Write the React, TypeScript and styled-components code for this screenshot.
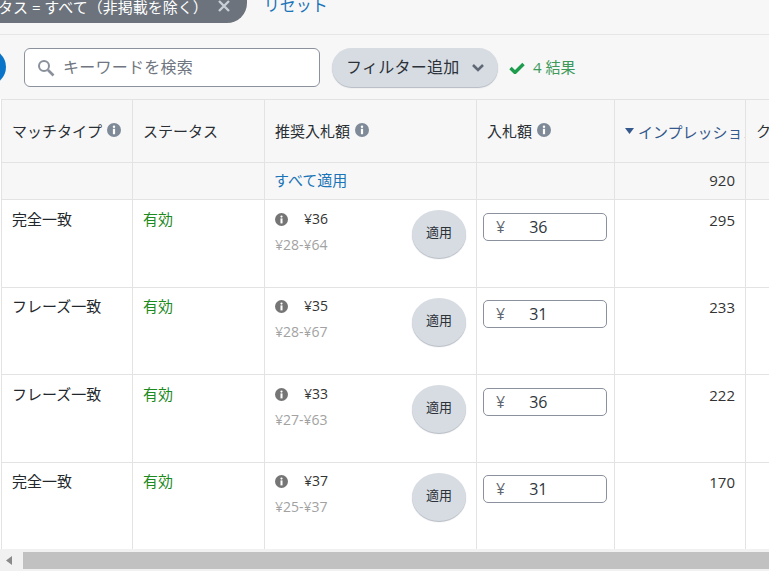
import { createGlobalStyle, styled } from 'styled-components';

const GlobalStyle = createGlobalStyle`
    html, body {
        margin: 0;
        padding: 0;
        background: #fff;
    }
    body {
        font-family: "Open Sans", "Noto Sans CJK JP", sans-serif;
        color: #1c2126;
    }
`;

const Page = styled.div`
    width: 769px;
    height: 582px;
    overflow: hidden;
    display: flex;
    flex-direction: column;
    background: #f7f7f7;
`;

const FilterBar = styled.div`
    height: 34px;
    flex: none;
    display: flex;
    align-items: flex-start;
    gap: 17px;
    border-bottom: 1px solid #e6e6e6;
`;

const FilterChip = styled.div`
    margin: -14px 0 0 -64px;
    height: 37px;
    padding: 3px 17px 0 17px;
    box-sizing: border-box;
    display: flex;
    align-items: center;
    gap: 10px;
    background: #6c737c;
    color: #fff;
    border-radius: 0 0 20px 0;
    font-size: 15px;
    white-space: nowrap;
`;

const ResetLink = styled.a`
    margin-top: -7px;
    color: #1a74b8;
    font-size: 16px;
    line-height: 24px;
`;

const Toolbar = styled.div`
    height: 64px;
    flex: none;
    display: flex;
    align-items: flex-start;
    padding-top: 13px;
    box-sizing: border-box;
`;

const BlueDot = styled.div`
    width: 36px;
    height: 36px;
    margin: 1px 18px 0 -30px;
    flex: none;
    border-radius: 50%;
    background: #0a74c8;
`;

const SearchBox = styled.div`
    width: 296px;
    height: 39px;
    box-sizing: border-box;
    display: flex;
    align-items: center;
    gap: 8px;
    padding: 0 0 0 12px;
    background: #fff;
    border: 1px solid #8b929e;
    border-radius: 6px;
    color: #6f7680;
    font-size: 16px;
    letter-spacing: 0.25px;
`;

const ButtonLabel = styled.span`
    margin-bottom: 3px;
`;

const FilterButton = styled.div`
    margin-left: 12px;
    width: 166px;
    height: 39px;
    box-sizing: border-box;
    display: flex;
    align-items: center;
    gap: 12px;
    padding-left: 14px;
    background: #d7dce3;
    border-radius: 20px;
    box-shadow: 0 1px 1px #b4bac2;
    color: #2c323a;
    font-size: 16px;
    letter-spacing: 0.25px;
`;

const ResultCount = styled.div`
    margin-left: 11px;
    height: 39px;
    display: flex;
    align-items: center;
    gap: 8px;
    color: #3d9a5a;
    font-size: 15px;
`;

const TableWrap = styled.div`
    height: 450px;
    flex: none;
    overflow: hidden;
    padding-left: 1px;
    background: #fff;
`;

const Table = styled.table`
    table-layout: fixed;
    width: 900px;
    border-collapse: collapse;
    font-size: 15px;
`;

const HeadCell = styled.th<{ $sorted?: boolean }>`
    height: 63px;
    box-sizing: border-box;
    padding: 0 10px 2px;
    background: #f7f7f7;
    border: 1px solid #e3e3e3;
    text-align: left;
    font-weight: 400;
    white-space: nowrap;
    overflow: hidden;
    color: ${p => (p.$sorted ? '#35598c' : '#2a2f35')};
`;

const SumCell = styled.td<{ $right?: boolean }>`
    height: 37px;
    box-sizing: border-box;
    padding: 0 10px 3px;
    background: #f7f7f7;
    border: 1px solid #e3e3e3;
    color: #333;
    text-align: ${p => (p.$right ? 'right' : 'left')};
`;

const BodyCell = styled.td<{ $green?: boolean }>`
    box-sizing: border-box;
    padding: calc(8px - var(--row-shift)) 10px 0;
    vertical-align: top;
    border: 1px solid #e3e3e3;
    background: #fff;
    line-height: 22px;
    color: ${p => (p.$green ? '#1d8a1d' : '#22272c')};
`;

const ImpCell = styled(BodyCell)`
    padding-top: calc(9px - var(--row-shift));
    text-align: right;
    color: #333;
`;

const InputCell = styled(BodyCell)`
    padding-left: 6px;
`;

const Row = styled.tr<{ $h: number; $tight: boolean }>`
    height: ${p => p.$h}px;
    --row-shift: ${p => (p.$tight ? 1 : 0)}px;
`;

const HeadInner = styled.span`
    display: inline-flex;
    align-items: center;
    gap: 5px;
`;

const LinkText = styled.a`
    color: #1a74b8;
    margin-left: -1px;
`;

const BidBlock = styled.div`
    display: flex;
    justify-content: space-between;
    margin-top: 1px;
`;

const BidText = styled.div`
    display: flex;
    flex-direction: column;
`;

const BidTop = styled.div`
    display: flex;
    align-items: center;
    gap: 16px;
    color: #333;
    font-size: 14px;
    line-height: 20px;
`;

const BidRange = styled.div`
    margin-top: 6px;
    color: #a2a2a2;
    font-size: 14px;
    line-height: 20px;
`;

const ApplyButton = styled.div`
    width: 54px;
    height: 48px;
    margin-top: calc(1px + var(--row-shift));
    padding-bottom: 5px;
    box-sizing: border-box;
    display: flex;
    align-items: center;
    justify-content: center;
    background: #d7dce3;
    border-radius: 50%;
    box-shadow: 0 1px 1px #b4bac2;
    color: #2c323a;
    font-size: 13px;
`;

const BidInput = styled.div`
    width: 124px;
    height: 28px;
    margin-top: 5px;
    box-sizing: border-box;
    display: flex;
    align-items: center;
    padding-left: 12px;
    gap: 24px;
    background: #fff;
    border: 1px solid #8b929e;
    border-radius: 5px;
    color: #30363c;
    font-size: 16px;
`;

const Yen = styled.span`
    color: #5f6670;
    font-size: 16px;
`;

const ScrollTrack = styled.div`
    height: 22px;
    flex: none;
    box-sizing: border-box;
    padding: 3px 0 2px;
    display: flex;
    align-items: stretch;
    background: #f1f1f1;
`;

const ScrollArrow = styled.div`
    width: 23px;
    display: flex;
    align-items: center;
    justify-content: center;
    padding-right: 5px;
    box-sizing: border-box;
`;

const ScrollThumb = styled.div`
    flex: 1;
    background: #c1c1c1;
`;

const Footer = styled.div`
    flex: 1;
    background: #fff;
`;

function InfoIcon({ size = 14, color = '#7f8a99' }: { size?: number; color?: string }) {
    return (
        <svg width={size} height={size} viewBox="0 0 14 14" style={{ flex: 'none' }}>
            <circle cx="7" cy="7" r="7" fill={color} />
            <circle cx="7" cy="3.8" r="1.2" fill="#fff" />
            <rect x="5.9" y="5.8" width="2.2" height="5.4" fill="#fff" />
        </svg>
    );
}

const rows = [
    { match: '完全一致', bid: '¥36', range: '¥28-¥64', input: '36', imp: 295, h: 88 },
    { match: 'フレーズ一致', bid: '¥35', range: '¥28-¥67', input: '31', imp: 233, h: 87 },
    { match: 'フレーズ一致', bid: '¥33', range: '¥27-¥63', input: '36', imp: 222, h: 88 },
    { match: '完全一致', bid: '¥37', range: '¥25-¥37', input: '31', imp: 170, h: 87 },
];

function App() {
    return (
        <Page>
            <GlobalStyle />
            <FilterBar>
                <FilterChip>
                    ステータス = すべて（非掲載を除く）
                    <svg width="12" height="12" viewBox="0 0 12 12">
                        <path d="M1 1l10 10M11 1L1 11" stroke="#c9ced4" strokeWidth="2.4" />
                    </svg>
                </FilterChip>
                <ResetLink>リセット</ResetLink>
            </FilterBar>
            <Toolbar>
                <BlueDot />
                <SearchBox>
                    <svg width="18" height="18" viewBox="0 0 18 18" fill="none" stroke="#8a919c" strokeWidth="2">
                        <circle cx="7" cy="7" r="5" />
                        <path d="M11 11l5.5 5.5" strokeWidth="2.6" />
                    </svg>
                    <ButtonLabel>キーワードを検索</ButtonLabel>
                </SearchBox>
                <FilterButton>
                    <ButtonLabel>フィルター追加</ButtonLabel>
                    <svg width="14" height="10" viewBox="0 0 14 10" fill="none" stroke="#5f6875" strokeWidth="2.6">
                        <path d="M2 2l5 5 5-5" />
                    </svg>
                </FilterButton>
                <ResultCount>
                    <svg width="16" height="12" viewBox="0 0 16 12" fill="none" stroke="#1c9c4c" strokeWidth="3.4">
                        <path d="M1.5 6l4.5 4.5L14.5 2" />
                    </svg>
                    <ButtonLabel>4 結果</ButtonLabel>
                </ResultCount>
            </Toolbar>
            <TableWrap>
                <Table>
                    <colgroup>
                        <col style={{ width: 131 }} />
                        <col style={{ width: 132 }} />
                        <col style={{ width: 212 }} />
                        <col style={{ width: 138 }} />
                        <col style={{ width: 131 }} />
                        <col style={{ width: 156 }} />
                    </colgroup>
                    <thead>
                        <tr>
                            <HeadCell>
                                <HeadInner>マッチタイプ<InfoIcon /></HeadInner>
                            </HeadCell>
                            <HeadCell>ステータス</HeadCell>
                            <HeadCell>
                                <HeadInner>推奨入札額<InfoIcon /></HeadInner>
                            </HeadCell>
                            <HeadCell>
                                <HeadInner>入札額<InfoIcon /></HeadInner>
                            </HeadCell>
                            <HeadCell $sorted>
                                <HeadInner>
                                    <svg width="9" height="6" viewBox="0 0 9 6"><path d="M0 0h9L4.5 6z" fill="#35598c" /></svg>
                                    <span style={{ marginLeft: -1 }}>インプレッション</span>
                                </HeadInner>
                            </HeadCell>
                            <HeadCell>クリック</HeadCell>
                        </tr>
                    </thead>
                    <tbody>
                        <tr>
                            <SumCell />
                            <SumCell />
                            <SumCell><LinkText>すべて適用</LinkText></SumCell>
                            <SumCell />
                            <SumCell $right>920</SumCell>
                            <SumCell />
                        </tr>
                        {rows.map((r, i) => (
                            <Row key={i} $h={r.h} $tight={i % 2 === 1}>
                                <BodyCell>{r.match}</BodyCell>
                                <BodyCell $green>有効</BodyCell>
                                <BodyCell>
                                    <BidBlock>
                                        <BidText>
                                            <BidTop>
                                                <InfoIcon size={13} color="#757575" />
                                                {r.bid}
                                            </BidTop>
                                            <BidRange>{r.range}</BidRange>
                                        </BidText>
                                        <ApplyButton>適用</ApplyButton>
                                    </BidBlock>
                                </BodyCell>
                                <InputCell>
                                    <BidInput>
                                        <Yen>¥</Yen>
                                        {r.input}
                                    </BidInput>
                                </InputCell>
                                <ImpCell>{r.imp}</ImpCell>
                                <BodyCell />
                            </Row>
                        ))}
                    </tbody>
                </Table>
            </TableWrap>
            <ScrollTrack>
                <ScrollArrow>
                    <svg width="6" height="9" viewBox="0 0 6 9"><path d="M6 0v9L0 4.5z" fill="#8a8a8a" /></svg>
                </ScrollArrow>
                <ScrollThumb />
            </ScrollTrack>
            <Footer />
        </Page>
    );
}

export default App;
